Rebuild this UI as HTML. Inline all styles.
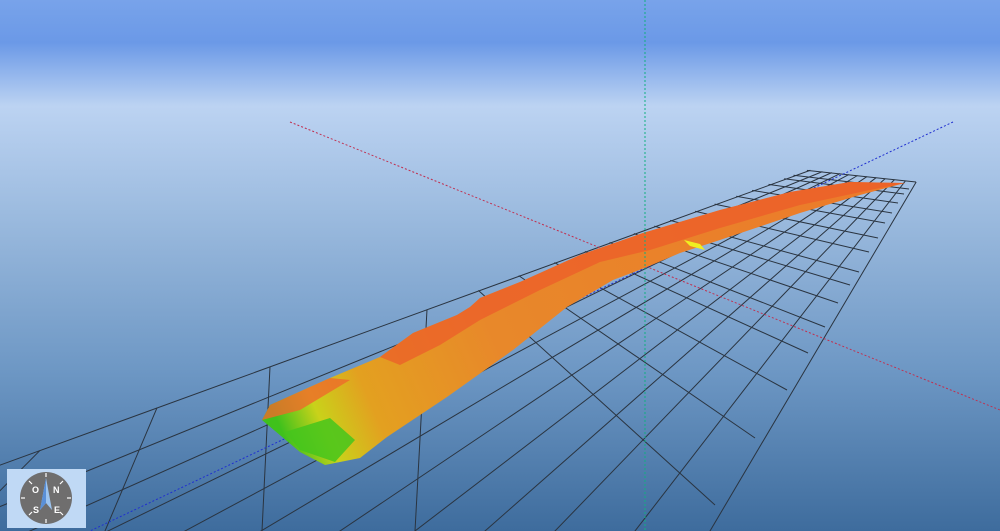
<!DOCTYPE html>
<html><head><meta charset="utf-8"><style>
html,body{margin:0;padding:0;width:1000px;height:531px;overflow:hidden}
svg{display:block}
</style></head><body>
<svg id="s" width="1000" height="531" viewBox="0 0 1000 531" xmlns="http://www.w3.org/2000/svg">
<defs>
<linearGradient id="sky" x1="0" y1="0" x2="0" y2="1">
<stop offset="0" stop-color="#78a3ea"/>
<stop offset="0.08" stop-color="#6b99e7"/>
<stop offset="0.2" stop-color="#bcd3f2"/>
<stop offset="0.4" stop-color="#9cbbdf"/>
<stop offset="0.7" stop-color="#6d97c4"/>
<stop offset="1" stop-color="#3e6c9d"/>
</linearGradient>
<linearGradient id="rib" x1="290" y1="450" x2="900" y2="185" gradientUnits="userSpaceOnUse">
<stop offset="0" stop-color="#3fc11c"/>
<stop offset="0.06" stop-color="#c9d21a"/>
<stop offset="0.14" stop-color="#e3a020"/>
<stop offset="0.35" stop-color="#e8882a"/>
<stop offset="1" stop-color="#ec7a2a"/>
</linearGradient>
</defs>
<rect width="1000" height="531" fill="url(#sky)"/>
<g id="grid" stroke="#2a3440" stroke-width="1" fill="none"></g>
<line x1="290" y1="122" x2="1000" y2="410" stroke="#c03050" stroke-width="1" stroke-dasharray="2,2"/>
<line x1="953" y1="122" x2="90" y2="531" stroke="#2030d0" stroke-width="1" stroke-dasharray="2,2"/>
<path d="M262,420 L270,405 L330,378 L380,357 L413,333 L457,315 L470,307 L480,298 L520,282 L580,255 L643,233 L720,210 L790,192 L850,182 L905,183 L860,195 L800,213 L720,240 L680,253 L647,267 L613,280 L567,307 L513,350 L447,397 L387,437 L360,458 L325,465 L300,452 Z" fill="url(#rib)"/>
<path d="M380,357 L413,333 L457,315 L470,307 L480,298 L520,282 L580,255 L643,233 L720,210 L790,192 L850,182 L905,183 L870,190 L800,205 L720,228 L650,250 L600,262 L540,290 L480,320 L440,345 L400,365 Z" fill="#ec5a2a" opacity="0.7"/>
<path d="M262,420 L270,405 L330,378 L350,380 L300,410 Z" fill="#ee6a2a" opacity="0.8"/>
<path d="M285,432 L330,418 L355,440 L335,462 L300,450 Z" fill="#45c51c" opacity="0.85"/>
<path d="M684,240 L700,244 L705,250 L690,246 Z" fill="#f0f020"/>
<line x1="645" y1="0" x2="645" y2="531" stroke="#10b080" stroke-width="1" stroke-dasharray="2,2"/>
<rect x="7" y="469" width="79" height="59" fill="#c0d9f5"/>
<circle cx="46" cy="498" r="26" fill="#6f6e6e"/>
<g stroke="#fff" stroke-width="1.2">
<line x1="46" y1="473" x2="46" y2="477"/><line x1="46" y1="519" x2="46" y2="523"/>
<line x1="21" y1="498" x2="25" y2="498"/><line x1="67" y1="498" x2="71" y2="498"/>
<line x1="29" y1="481" x2="32" y2="484"/><line x1="63" y1="481" x2="60" y2="484"/>
<line x1="29" y1="515" x2="32" y2="512"/><line x1="63" y1="515" x2="60" y2="512"/>
</g>
<path d="M46,478 L52,510 L46,503 L40,510 Z" fill="#9cc4f0"/>
<path d="M46,478 L46,503 L40,510 Z" fill="#5a90d8"/>
<g font-family="Liberation Sans, sans-serif" font-size="9" font-weight="bold" fill="#fff">
<text x="32" y="493">O</text><text x="53" y="493">N</text>
<text x="33" y="513">S</text><text x="54" y="513">E</text>
</g>
</svg>
<script>
(function(){
var g=document.getElementById('grid'),ns='http://www.w3.org/2000/svg';
function L(a,c){var l=document.createElementNS(ns,'line');l.setAttribute('x1',a[0]);l.setAttribute('y1',a[1]);l.setAttribute('x2',c[0]);l.setAttribute('y2',c[1]);g.appendChild(l);}
function inter(p1,p2,p3,p4){var d=(p1[0]-p2[0])*(p3[1]-p4[1])-(p1[1]-p2[1])*(p3[0]-p4[0]);
var a=p1[0]*p2[1]-p1[1]*p2[0],b=p3[0]*p4[1]-p3[1]*p4[0];
return [(a*(p3[0]-p4[0])-(p1[0]-p2[0])*b)/d,(a*(p3[1]-p4[1])-(p1[1]-p2[1])*b)/d];}
var A=[808,170],B=[916,182],VP1=[285,115],VP2=[954,118];
var tx=[-181,-60,30,108,185,261,340,415,485,555,635,710];
for(var i=0;i<tx.length;i++){var T=[tx[i],531];var F=inter(VP2,T,A,B);
L(F,[F[0]+(T[0]-F[0])*2,F[1]+(T[1]-F[1])*2]);}
var LE1=[0,465],LE2=A;
var R=[[916,182],[909,189],[904,194],[898,203],[892,213],[885,223],[878,238],[869,252],[859,272],[850,285],[838,303],[825,327],[808,353],[787,390],[755,438],[715,505]];
for(var i=0;i<R.length;i++){var P=inter(R[i],VP1,LE1,LE2);L(P,R[i]);}
var extra=[[40,[-40,531]],[157,[105,531]],[270,[262,531]],[427,[415,531]]];
for(var k=0;k<extra.length;k++){var x=extra[k][0],p=[x,465-0.364*x],q=extra[k][1];L(p,[p[0]+(q[0]-p[0])*3,p[1]+(q[1]-p[1])*3]);}
})();
</script>
</body></html>
